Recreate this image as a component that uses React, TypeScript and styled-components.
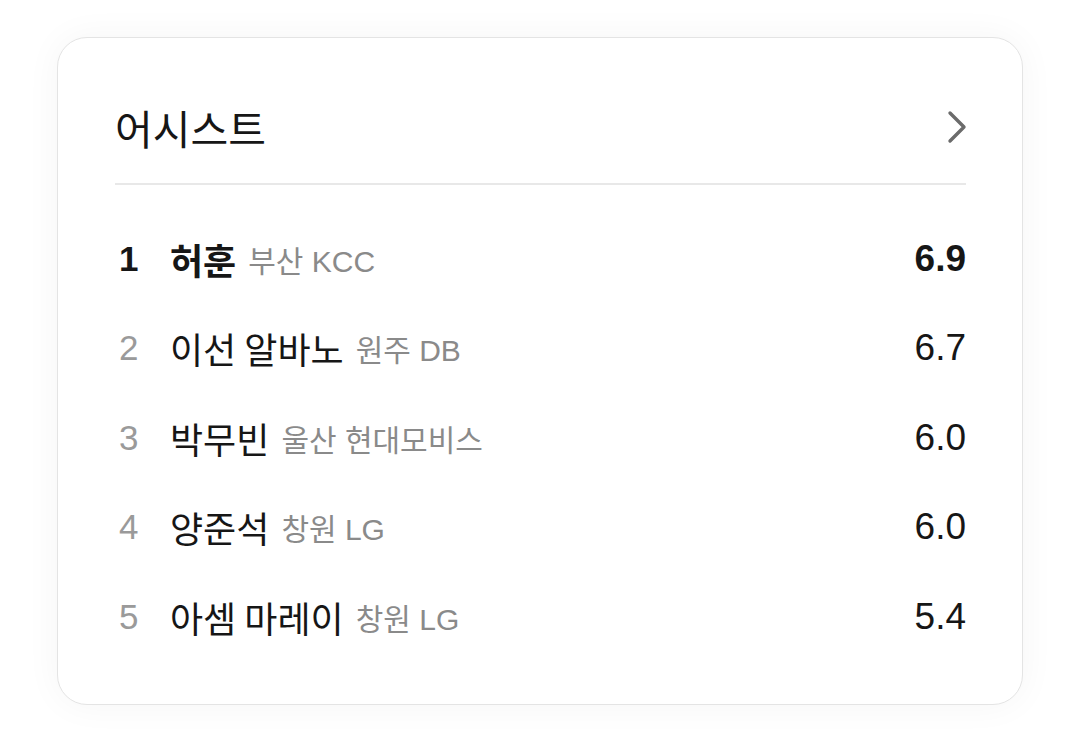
import React from 'react';
import styled, { createGlobalStyle } from 'styled-components';

const players = [
    { rank: 1, name: '허훈', team: '부산 KCC', value: '6.9' },
    { rank: 2, name: '이선 알바노', team: '원주 DB', value: '6.7' },
    { rank: 3, name: '박무빈', team: '울산 현대모비스', value: '6.0' },
    { rank: 4, name: '양준석', team: '창원 LG', value: '6.0' },
    { rank: 5, name: '아셈 마레이', team: '창원 LG', value: '5.4' },
];

export default function App() {
    return (
        <>
            <GlobalStyle />
            <Page>
                <Card>
                    <Header>
                        <Title>어시스트</Title>
                        <Chevron width="22" height="36" viewBox="0 0 22 36" aria-hidden>
                            <path d="M4 4 L18 18 L4 32" />
                        </Chevron>
                    </Header>
                    <List>
                        {players.map((p) => (
                            <Row key={p.rank}>
                                <Rank $top={p.rank === 1}>{p.rank}</Rank>
                                <Name $top={p.rank === 1}>{p.name}</Name>
                                <Team>{p.team}</Team>
                                <Value $top={p.rank === 1}>{p.value}</Value>
                            </Row>
                        ))}
                    </List>
                </Card>
            </Page>
        </>
    );
}

const GlobalStyle = createGlobalStyle`
    body {
        margin: 0;
        background: #ffffff;
        font-family: "Liberation Sans", "Noto Sans CJK KR", sans-serif;
        color: #161616;
    }
`;

const Page = styled.div`
    width: 1080px;
    height: 736px;
    padding: 37px 0 0 57px;
    box-sizing: border-box;
`;

const Card = styled.div`
    width: 966px;
    height: 668px;
    box-sizing: border-box;
    border: 1.5px solid #e4e4e4;
    border-radius: 30px;
    background: #fff;
    box-shadow: 0 0 36px rgba(0, 0, 0, 0.045);
    padding: 0 56px 0 57px;
    display: flex;
    flex-direction: column;
`;

const Header = styled.div`
    display: flex;
    align-items: center;
    justify-content: space-between;
    padding: 61px 0 28px;
    border-bottom: 2px solid #e8e8e8;
`;

const Title = styled.h2`
    margin: 0;
    font-family: "Noto Sans CJK KR", sans-serif;
    font-size: 41px;
    font-weight: 400;
    line-height: 56px;
    color: #161616;
`;

const Chevron = styled.svg`
    margin-right: -2px;
    path {
        fill: none;
        stroke: #6b6b6b;
        stroke-width: 3.4;
        stroke-linecap: round;
        stroke-linejoin: round;
    }
`;

const List = styled.div`
    display: flex;
    flex-direction: column;
    padding-top: 29px;
`;

const Row = styled.div`
    display: flex;
    align-items: center;
    height: 89.5px;
`;

const Rank = styled.span<{ $top?: boolean }>`
    width: 55px;
    padding-left: 4px;
    box-sizing: border-box;
    font-size: 35px;
    font-weight: ${(p) => (p.$top ? 700 : 400)};
    color: ${(p) => (p.$top ? '#161616' : '#9a9a9a')};
`;

const Name = styled.span<{ $top?: boolean }>`
    font-family: "Noto Sans CJK KR", sans-serif;
    font-size: 36px;
    font-weight: ${(p) => (p.$top ? 700 : 400)};
    color: #161616;
`;

const Team = styled.span`
    margin-left: 12px;
    font-size: 30px;
    color: #8a8a8a;
`;

const Value = styled.span<{ $top?: boolean }>`
    margin-left: auto;
    font-size: 37px;
    font-weight: ${(p) => (p.$top ? 700 : 400)};
    color: #161616;
`;
